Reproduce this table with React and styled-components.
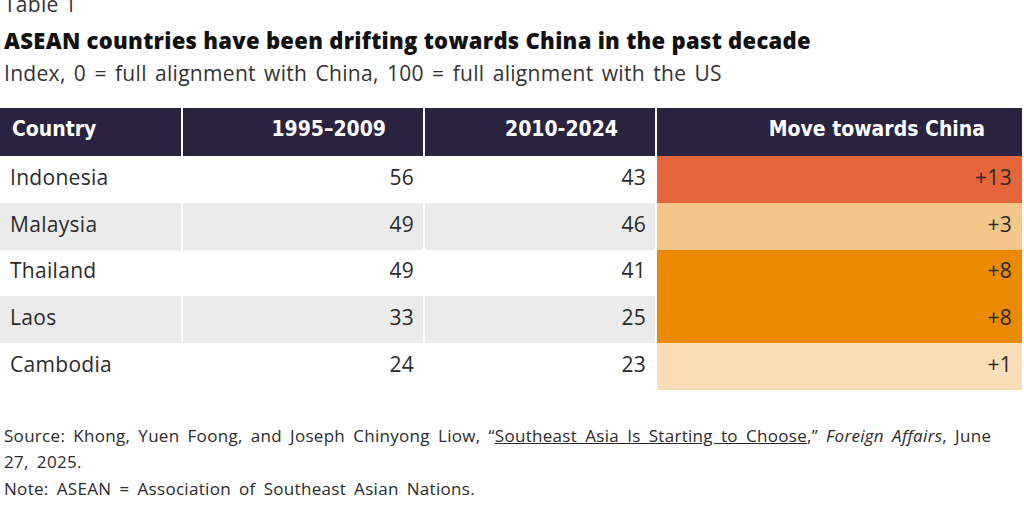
import React from 'react';
import styled, { createGlobalStyle } from 'styled-components';

const GlobalStyle = createGlobalStyle`
  html, body {
    margin: 0;
    padding: 0;
    background: #fff;
  }
  body {
    font-family: "Open Sans", "Liberation Sans", Arial, sans-serif;
    color: #2b2b2b;
  }
`;

const Page = styled.div`
  width: 1024px;
  height: 512px;
  overflow: hidden;
  display: flex;
  flex-direction: column;
`;

const Head = styled.div`
  padding: 0 4px;
  margin-top: -9px;
`;

const Label = styled.div`
  font-size: 21px;
  line-height: 26px;
  letter-spacing: 0.3px;
  color: #333;
`;

const Title = styled.h1`
  margin: 8px 0 0;
  font-family: "Open Sans", "Liberation Sans", Arial, sans-serif;
  font-weight: 800;
  font-size: 22px;
  line-height: 30px;
  letter-spacing: 0.3px;
  color: #111;
`;

const Subtitle = styled.div`
  font-size: 21px;
  line-height: 30px;
  letter-spacing: 0.3px;
  word-spacing: 2.5px;
  color: #333;
  margin-top: 3px;
`;

const Table = styled.table`
  margin-top: 20px;
  width: 1022px;
  border-collapse: collapse;
  table-layout: fixed;
`;

const Th = styled.th`
  background: #29233f;
  color: #fff;
  font-family: "Liberation Sans Narrow", "DejaVu Sans Condensed", "Liberation Sans", sans-serif;
  font-weight: 700;
  font-size: 21px;
  height: 48px;
  box-sizing: border-box;
  padding: ${p => (p.$left ? '0 0 6px 12px' : '0 37px 6px 0')};
  text-align: ${p => (p.$left ? 'left' : 'right')};
  border-left: 2px solid #fff;
  &:first-child { border-left: none; }
`;

const Tr = styled.tr`
  background: ${p => (p.$shade ? '#ebebeb' : '#fff')};
`;

const Td = styled.td`
  font-size: 21px;
  letter-spacing: 0.3px;
  height: 46.8px;
  box-sizing: border-box;
  padding: ${p => (p.$left ? '0 0 5px 10px' : '0 9px 5px 0')};
  text-align: ${p => (p.$left ? 'left' : 'right')};
  color: #2b2b2b;
  border-left: 2px solid #fff;
  &:first-child { border-left: none; }
`;

const MoveTd = styled(Td)`
  background: ${p => p.$bg};
  padding-right: 10px;
`;

const Footer = styled.div`
  margin-top: 33px;
  padding: 0 4px;
  font-size: 17px;
  line-height: 26.5px;
  letter-spacing: 0.3px;
  word-spacing: 3.4px;
  color: #2b2b2b;
  width: 1000px;
`;

const Link = styled.span`
  text-decoration: underline;
`;

const rows = [
  { name: 'Indonesia', a: 56, b: 43, move: '+13', bg: '#e4663a' },
  { name: 'Malaysia', a: 49, b: 46, move: '+3', bg: '#f3c689' },
  { name: 'Thailand', a: 49, b: 41, move: '+8', bg: '#eb8a00' },
  { name: 'Laos', a: 33, b: 25, move: '+8', bg: '#eb8a00' },
  { name: 'Cambodia', a: 24, b: 23, move: '+1', bg: '#fbdeb7' },
];

export default function App() {
  return (
    <Page>
      <GlobalStyle />
      <Head>
        <Label>Table 1</Label>
        <Title>ASEAN countries have been drifting towards China in the past decade</Title>
        <Subtitle>Index, 0 = full alignment with China, 100 = full alignment with the US</Subtitle>
      </Head>
      <Table>
        <colgroup>
          <col style={{ width: 182 }} />
          <col style={{ width: 242 }} />
          <col style={{ width: 232 }} />
          <col style={{ width: 366 }} />
        </colgroup>
        <thead>
          <tr>
            <Th $left>Country</Th>
            <Th>1995–2009</Th>
            <Th>2010-2024</Th>
            <Th>Move towards China</Th>
          </tr>
        </thead>
        <tbody>
          {rows.map((r, i) => (
            <Tr key={r.name} $shade={i % 2 === 1}>
              <Td $left>{r.name}</Td>
              <Td>{r.a}</Td>
              <Td>{r.b}</Td>
              <MoveTd $bg={r.bg}>{r.move}</MoveTd>
            </Tr>
          ))}
        </tbody>
      </Table>
      <Footer>
        Source: Khong, Yuen Foong, and Joseph Chinyong Liow, “<Link>Southeast Asia Is Starting to Choose</Link>,” <i>Foreign Affairs</i>, June 27, 2025.
        <br />
        Note: ASEAN = Association of Southeast Asian Nations.
      </Footer>
    </Page>
  );
}
